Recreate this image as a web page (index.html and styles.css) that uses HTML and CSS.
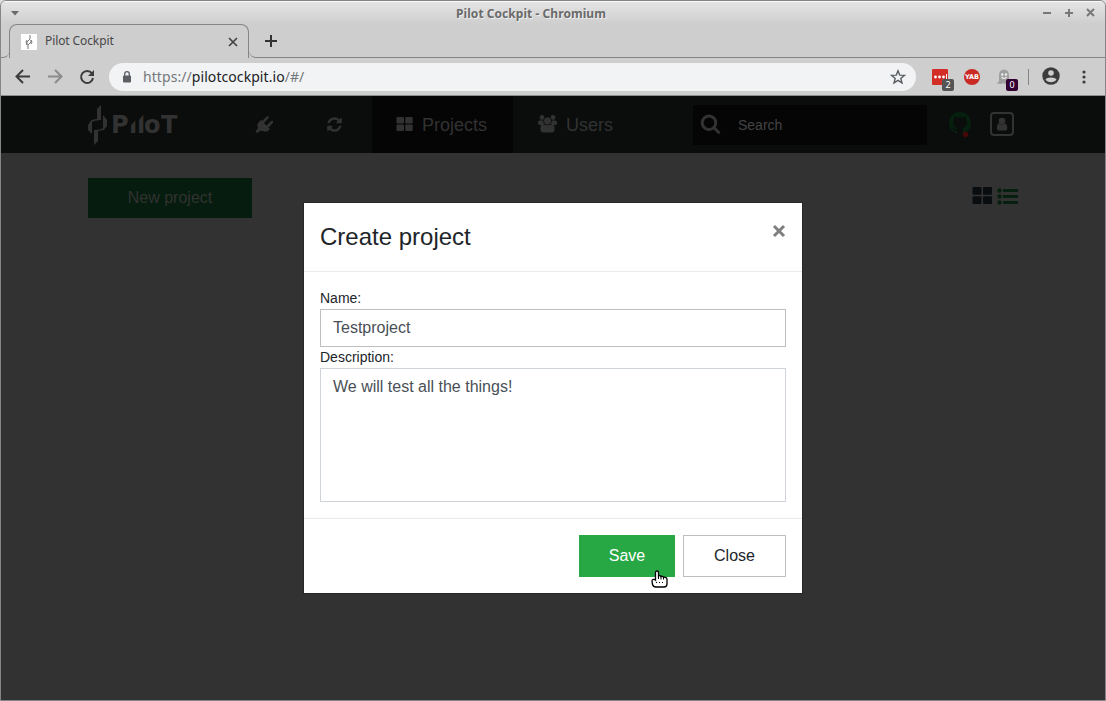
FILE: index.html
```html
<!DOCTYPE html>
<html lang="en">
<head>
<meta charset="utf-8">
<title>Pilot Cockpit</title>
<link rel="stylesheet" href="styles.css">
</head>
<body>
<div class="window">
  <header class="titlebar">
    <svg class="window-menu" width="10" height="6" viewBox="0 0 10 6"><path d="M1 1h8L5 5.5z"/></svg>
    <div class="window-title">Pilot Cockpit - Chromium</div>
    <svg class="window-controls" width="54" height="10" viewBox="0 0 54 10"><path d="M1 5h8M23 5h8M27 1v8M45 1l7 7M52 1l-7 7"/></svg>
  </header>

  <div class="tabstrip">
    <div class="strip-start"></div>
    <div class="tab">
      <svg class="favicon" width="16" height="16" viewBox="0 0 16 16"><path d="M9 1v4L6 8v3M6 6l-1 2 1 3M7 15v-4l3-3V6M10 6l1 2-1 2"/></svg>
      <span class="tab-title">Pilot Cockpit</span>
      <svg class="tab-close" width="10" height="10" viewBox="0 0 10 10"><path d="M1 1l8 8M9 1L1 9"/></svg>
    </div>
    <div class="strip-rest">
      <svg width="12" height="12" viewBox="0 0 12 12"><path d="M6 0v12M0 6h12"/></svg>
    </div>
  </div>

  <div class="toolbar">
    <svg class="nav-icon back" width="16" height="16" viewBox="0 0 16 16"><path d="M15 7.5H2M8 1L1.500 7.500 8 14"/></svg>
    <svg class="nav-icon forward" width="16" height="16" viewBox="0 0 16 16"><path d="M1 7.500h13M8 1l6.500 6.500L8 14"/></svg>
    <svg class="nav-icon reload" width="16" height="16" viewBox="0 0 16 16"><path d="M13 4.500A6 6 0 1 0 14 9"/><path class="solid" d="M15 1v6H9z"/></svg>
    <div class="address">
      <svg class="lock" width="10" height="12" viewBox="0 0 10 12"><rect x="1" y="4.500" width="8" height="7" rx="1"/><path d="M2.700 5V3a2.300 2.300 0 0 1 4.600 0v2"/></svg>
      <div class="url">https://<b>pilotcockpit.io</b>/#/</div>
      <svg class="star" width="16" height="16" viewBox="0 0 16 16"><path d="M8 1.800l1.700 4.300 4.700.3-3.600 3 1.200 4.500L8 11.400l-4 2.500 1.200-4.500-3.600-3 4.700-.3z"/></svg>
    </div>
    <div class="extension">
      <svg width="16" height="16" viewBox="0 0 16 16"><rect width="16" height="16" rx="1" fill="#d32d27"/><g fill="#fff"><circle cx="3.500" cy="8" r="1.400"/><circle cx="7.500" cy="8" r="1.400"/><circle cx="11.500" cy="8" r="1.400"/><path d="M14 5h1v5h-1z"/></g></svg>
      <span class="badge">2</span>
    </div>
    <div class="extension yab">YAB</div>
    <div class="extension ghost">
      <svg width="16" height="16" viewBox="0 0 16 16"><path fill="#a0a0a0" d="M3 6a5 5.500 0 0 1 10 0v9l-2-1-2 1-2-1-2 1-4-.5L3 12z"/><g fill="#eee"><circle cx="6.300" cy="5.500" r="1.200"/><circle cx="10" cy="5.500" r="1.200"/></g><path fill="none" stroke="#eee" stroke-width="1.200" d="M5.500 8q2.500 3 5 0"/></svg>
      <span class="badge purple">0</span>
    </div>
    <div class="separator"></div>
    <svg class="profile" width="18" height="18" viewBox="0 0 18 18"><circle cx="9" cy="9" r="8.700" fill="#3c3c3c"/><circle cx="9" cy="6" r="2.800" fill="#cecece"/><path fill="#cecece" d="M3.500 12.500c1-2.700 10-2.700 11 0-2.500 3.700-8.500 3.700-11 0z"/></svg>
    <svg class="more" width="4" height="14" viewBox="0 0 4 14"><circle cx="2" cy="2" r="1.600"/><circle cx="2" cy="7" r="1.600"/><circle cx="2" cy="12" r="1.600"/></svg>
  </div>

  <main class="page">
    <nav class="navbar">
      <svg class="logo" width="92" height="42" viewBox="0 0 92 42">
        <path d="M9 6l4-4v15H9zM15 12l4 5v6l-4 5zM0 22l4-5v14l-4-4zM6 27h4v11l-4 4z"/>
        <path class="thin" d="M11 16.500C4 16.500 1 19 1 24M8 27.500c6 0 9.500-3 10-7"/>
        <text y="30" x="23 41 49 56 73">PıloT</text>
        <path class="cut" d="M49 8h7v3l-5 6h-2zM41 14h8v2l-6 6h-2z"/>
      </svg>
      <svg class="plug" width="18" height="18" viewBox="0 0 18 18"><path d="M4 7l2-2 9 9-2 2c-2 1-5 1-7-.5L2 18 .5 16.500 3 13C2 11 2 9 4 7z" transform="translate(0 -1)"/><path class="prongs" d="M8 6l4.500-4.500M12.500 10.500L17 6"/></svg>
      <svg class="refresh" width="17" height="17" viewBox="0 0 1792 1792"><path d="M1639 1056q0 5-1 7-64 268-268 434.500t-478 166.500q-146 0-282.500-55t-243.500-157l-129 129q-19 19-45 19t-45-19-19-45v-448q0-26 19-45t45-19h448q26 0 45 19t19 45-19 45l-137 137q71 66 161 102t187 36q134 0 250-65t186-179q11-17 53-117 8-23 30-23h192q13 0 22.500 9.500t9.500 22.500zm25-800v448q0 26-19 45t-45 19h-448q-26 0-45-19t-19-45 19-45l138-138q-148-137-349-137-134 0-250 65t-186 179q-11 17-53 117-8 23-30 23h-199q-13 0-22.500-9.500t-9.500-22.500v-7q65-268 270-434.500t480-166.500q146 0 284 55.500t245 156.500l130-129q19-19 45-19t45 19 19 45z"/></svg>
      <div class="nav-item active">
        <svg width="18" height="14" viewBox="0 0 18 14"><rect x=".5" width="7.500" height="6.500" rx="1"/><rect x="9.200" width="7.500" height="6.500" rx="1"/><rect x=".5" y="7.500" width="7.500" height="6.500" rx="1"/><rect x="9.200" y="7.500" width="7.500" height="6.500" rx="1"/></svg>
        <span>Projects</span>
      </div>
      <div class="nav-item users">
        <svg width="20" height="18" viewBox="0 0 20 18"><circle cx="4" cy="2.500" r="2.400"/><circle cx="15" cy="2.500" r="2.400"/><rect x="0" y="5.500" width="6" height="4.500" rx="1.800"/><rect x="13" y="5.500" width="6" height="4.500" rx="1.800"/><rect x="2.500" y="9.500" width="14" height="8" rx="3"/><circle class="head" cx="9.500" cy="6" r="4"/></svg>
        <span>Users</span>
      </div>
      <div class="search">
        <svg width="21" height="21" viewBox="0 0 1792 1792"><path d="M1216 832q0-185-131.500-316.500t-316.500-131.500-316.500 131.500-131.500 316.500 131.500 316.500 316.500 131.500 316.500-131.500 131.500-316.500zm512 832q0 52-38 90t-90 38q-54 0-90-38l-343-342q-179 124-399 124-143 0-273.500-55.500t-225-150-150-225-55.500-273.500 55.500-273.500 150-225 225-150 273.500-55.500 273.500 55.500 225 150 150 225 55.500 273.500q0 220-124 399l343 343q37 37 37 90z"/></svg>
        <span>Search</span>
      </div>
      <svg class="github" width="22" height="26" viewBox="0 0 22 26"><path transform="scale(1.370)" d="M8 0C3.580 0 0 3.580 0 8c0 3.540 2.290 6.530 5.470 7.590.4.070.55-.17.55-.38 0-.19-.01-.82-.01-1.490-2.010.37-2.530-.49-2.690-.94-.09-.23-.48-.94-.82-1.130-.28-.15-.68-.52-.01-.53.63-.01 1.080.58 1.230.82.72 1.210 1.870.87 2.330.66.070-.52.28-.87.51-1.070-1.780-.2-3.640-.89-3.640-3.950 0-.87.31-1.590.82-2.150-.08-.2-.36-1.020.08-2.120 0 0 .67-.21 2.200.82.64-.18 1.320-.27 2-.27.68 0 1.360.09 2 .27 1.530-1.040 2.200-.82 2.200-.82.44 1.100.16 1.920.08 2.120.51.56.82 1.270.82 2.150 0 3.070-1.870 3.750-3.650 3.950.29.25.54.73.54 1.480 0 1.070-.01 1.930-.01 2.200 0 .21.15.46.55.38A8.013 8.013 0 0016 8c0-4.420-3.580-8-8-8z"/><circle class="alert" cx="16.500" cy="22.500" r="2.700"/></svg>
      <svg class="account" width="24" height="24" viewBox="0 0 24 24"><rect class="frame" x="1" y="1" width="22" height="22" rx="3"/><circle cx="12" cy="9" r="3.300"/><path d="M6.800 16c0-3 1-4.500 2.700-4.500 1.500 1.300 3.500 1.300 5 0 1.700 0 2.800 1.500 2.800 4.500 0 2-1 2.600-2 2.600H8.800c-1 0-2-.6-2-2.600z"/></svg>
    </nav>

    <div class="actions">
      <div class="new-project">New project</div>
      <svg class="view-grid" width="21" height="17" viewBox="0 0 21 17"><rect x=".5" width="9" height="7.800" rx="1"/><rect x="11" width="9" height="7.800" rx="1"/><rect x=".5" y="9.200" width="9" height="7.800" rx="1"/><rect x="11" y="9.200" width="9" height="7.800" rx="1"/></svg>
      <svg class="view-list" width="22" height="17" viewBox="0 0 22 17"><circle cx="2.500" cy="2.500" r="2.200"/><circle cx="2.500" cy="8.500" r="2.200"/><circle cx="2.500" cy="14.500" r="2.200"/><path d="M6 1h15v3H6zM6 7h15v3H6zM6 13h15v3H6z"/></svg>
    </div>

    <section class="dialog">
      <div class="dialog-header">
        <h1>Create project</h1>
        <svg class="dialog-close" width="14" height="14" viewBox="0 0 14 14"><path d="M2 2l10 10M12 2L2 12"/></svg>
      </div>
      <div class="dialog-body">
        <div class="label">Name:</div>
        <div class="field name">Testproject</div>
        <div class="label">Description:</div>
        <div class="field description">We will test all the things!</div>
      </div>
      <div class="dialog-footer">
        <div class="button save">Save
          <svg class="cursor" width="18" height="19" viewBox="0 0 18 19"><path d="M4.500 10V2.500c0-2 3-2 3 0V6c.7-.8 2-.5 2.500.5.8-.5 2-.3 2.500.8 1-.3 3.500 0 3.500 2V14c0 2-1 3-3 3H5c-2 0-3-.8-3.500-2.500L1 11c0-1.800 2.500-2 3.500-1z"/><path class="detail" d="M7.500 6v3M10 6.500v3M12.500 7.500v2M5 12.500h1M8 12.500h1M11 12.500h1"/></svg>
        </div>
        <div class="button close">Close</div>
      </div>
    </section>
  </main>
</div>
</body>
</html>
```
FILE: styles.css
```css
* { box-sizing: border-box; }
svg { display: block; flex: none; }
body { margin: 0; background: #e0e0e0; font-family: "Liberation Sans", Arial, sans-serif; }

.window {
  display: flex;
  flex-direction: column;
  width: 1106px;
  height: 701px;
  border: 1px solid #858585;
  border-radius: 6px 6px 0 0;
  background: #cecece;
  overflow: hidden;
}

.titlebar {
  display: flex;
  align-items: center;
  height: 23px;
  padding: 0 9px 0 9px;
  border-top: 1px solid #f8f8f8;
  background: linear-gradient(#e4e4e4, #cecece);
}
.window-menu { fill: #6a6a6a; }
.window-title {
  flex: 1;
  padding-top: 2px;
  text-align: center;
  font: bold 12px/22px "Noto Sans", sans-serif;
  letter-spacing: .05px;
  color: #6a6a6a;
  text-shadow: 1px 1px 0 #eee;
}
.window-controls { fill: none; stroke: #777; stroke-width: 2; }

.tabstrip { display: flex; height: 34px; }
.strip-start { width: 8px; border-bottom: 1px solid #858585; border-bottom-right-radius: 6px; }
.tab {
  display: flex;
  align-items: center;
  width: 240px;
  padding: 0 10px 0 11px;
  border: 1px solid #858585;
  border-bottom: 0;
  border-radius: 8px 8px 0 0;
}
.favicon { background: #fff; fill: none; stroke: #777; stroke-width: 1; }
.tab-title { flex: 1; margin: -2px 0 0 8px; font: 12px/20px "Noto Sans", sans-serif; letter-spacing: -.1px; color: #484848; }
.tab-close { stroke: #444; stroke-width: 1.7; }
.strip-rest { flex: 1; padding: 11px 0 0 16px; border-bottom: 1px solid #858585; border-bottom-left-radius: 7px; }
.strip-rest svg { stroke: #333; stroke-width: 2; }

.toolbar { display: flex; align-items: center; height: 38px; padding: 0 19px 0 14px; border-bottom: 1px solid #8b8f8d; }
.nav-icon { margin-right: 16px; fill: none; stroke: #3c3c3c; stroke-width: 2; }
.forward { stroke: #8b8b8b; }
.nav-icon.reload { margin-right: 14px; }
.reload .solid { fill: #3c3c3c; stroke: none; }
.address { display: flex; align-items: center; width: 808px; height: 28px; padding: 0 10px 0 13px; border-radius: 14px; background: #f1f3f4; }
.lock { fill: #5b5f63; stroke: #5b5f63; stroke-width: 1.3; }
.lock path { fill: none; }
.lock rect { stroke: none; }
.url { flex: 1; margin-left: 11px; font: 14px/20px "Noto Sans", sans-serif; letter-spacing: .07px; color: #74787c; }
.url b { font-weight: 400; color: #202124; }
.star { fill: none; stroke: #5b5f63; stroke-width: 1.4; }
.extension { position: relative; flex: none; width: 16px; height: 16px; margin-left: 16px; }
.badge {
  position: absolute;
  left: 10px;
  top: 10px;
  width: 12px;
  height: 12px;
  border-radius: 2px;
  background: #555;
  color: #fff;
  font: 9px/12px "Noto Sans", sans-serif;
  text-align: center;
}
.badge.purple { background: #330033; }
.yab { border-radius: 8px; background: #c92a23; color: #fff; font: bold 6.500px/16px "DejaVu Sans", sans-serif; text-align: center; }
.separator { width: 1px; height: 16px; margin-left: 16px; background: #858585; }
.profile { margin: -2px 0 0 13px; }
.more { margin-left: 22px; fill: #3c3c3c; }

.page { position: relative; flex: 1; background: #323232; }
.navbar { display: flex; align-items: center; height: 57px; padding-left: 87px; background: #0a0d0c; fill: #323232; }
.logo { margin-top: -1px; }
.logo .thin { fill: none; stroke: #323232; stroke-width: 1.5; }
.logo .cut { fill: #0a0d0c; }
.logo text { font: bold 24px "DejaVu Sans", sans-serif; }
.plug { margin-left: 75px; }
.plug .prongs { stroke: #323232; stroke-width: 2.5; stroke-linecap: round; }
.refresh { margin-left: 53px; }
.nav-item { display: flex; align-items: center; height: 57px; color: #323232; font-size: 18px; }
.nav-item.active { width: 141px; margin-left: 29px; padding-left: 24px; background: #050505; }
.nav-item svg { margin-top: -1px; }
.nav-item span { margin: 2px 0 0 8px; }
.users { width: 180px; padding-left: 25px; }
.head { stroke: #0a0d0c; stroke-width: .8; }
.search { display: flex; align-items: center; width: 234px; height: 40px; padding-left: 7px; background: #050505; color: #444; font-size: 14px; }
.search svg { margin-top: -2px; }
.search span { margin-left: 17px; }
.github { margin-left: 22px; fill: #06200f; }
.alert { fill: #450707; }
.account { margin: -1px 0 0 19px; }
.account .frame { fill: none; stroke: #323232; stroke-width: 2; }

.actions { display: flex; align-items: flex-start; padding: 25px 86px 0 87px; }
.new-project { width: 164px; height: 40px; margin-right: auto; background: #051c0e; color: #323232; font-size: 16px; line-height: 39px; text-align: center; }
.view-grid { margin-top: 9px; fill: #0a0d0f; }
.view-list { margin: 10px 0 0 4px; fill: #06200f; }

.dialog { position: absolute; left: 303px; top: 107px; width: 498px; height: 390px; background: #fff; color: #212529; box-shadow: 0 0 0 1px #272727; }
.dialog-header { display: flex; justify-content: space-between; height: 69px; padding: 16px; border-bottom: 1px solid #e9ecef; }
.dialog-header h1 { margin: 0; font-size: 24px; font-weight: 400; line-height: 36px; }
.dialog-close { margin-top: 5px; stroke: #7f7f7f; stroke-width: 3; }
.dialog-body { height: 247px; padding: 16px; border-bottom: 1px solid #e9ecef; }
.label { height: 21px; font-size: 14px; line-height: 21px; }
.field { padding: 0 12px; border: 1px solid #bfbfbf; color: #495057; font-size: 16px; line-height: 36px; }
.name { height: 38px; }
.description { height: 134px; border-color: #ced4da; }
.dialog-footer { display: flex; justify-content: flex-end; gap: 8px; padding: 16px; }
.button { position: relative; height: 42px; font-size: 16px; line-height: 42px; text-align: center; }
.save { width: 96px; background: #28a745; color: #fff; }
.close { width: 103px; border: 1px solid #bfbfbf; line-height: 40px; }
.cursor { position: absolute; left: 72px; top: 35px; fill: #fff; stroke: #000; stroke-width: 1.3; }
.cursor .detail { stroke-width: 1; }
```
